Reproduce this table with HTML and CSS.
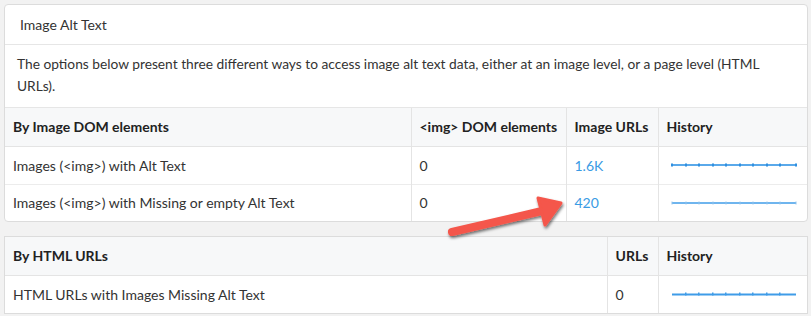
FILE: index.html
```html
<!DOCTYPE html>
<html lang="en">
<head>
    <meta charset="UTF-8">
    <title>Image Alt Text</title>
    <link rel="stylesheet" href="styles.css">
</head>
<body>

    <!-- Main panel -->
    <div class="panel">
        <div class="panel-heading">Image Alt Text</div>
        <div class="panel-body">
            The options below present three different ways to access image alt text data, either at an image level, or a page level (HTML URLs).
        </div>
        <table class="data-table">
            <colgroup>
                <col class="col-name">
                <col class="col-dom">
                <col class="col-urls">
                <col class="col-history">
            </colgroup>
            <thead>
                <tr>
                    <th>By Image DOM elements</th>
                    <th>&lt;img&gt; DOM elements</th>
                    <th>Image URLs</th>
                    <th>History</th>
                </tr>
            </thead>
            <tbody>
                <tr>
                    <td>Images (&lt;img&gt;) with Alt Text</td>
                    <td>0</td>
                    <td><a href="#">1.6K</a></td>
                    <td>
                        <svg class="spark" width="126" height="6" viewBox="0 0 126 6">
                            <line x1="1" y1="3" x2="125" y2="3" stroke="#5aa9ea" stroke-width="2"/>
                            <g fill="#2f8fe0">
                                <rect x="0" y="1.5" width="2" height="3"/><rect x="14" y="1.5" width="2" height="3"/>
                                <rect x="27" y="1.5" width="2" height="3"/><rect x="41" y="1.5" width="2" height="3"/>
                                <rect x="54" y="1.5" width="2" height="3"/><rect x="68" y="1.5" width="2" height="3"/>
                                <rect x="81" y="1.5" width="2" height="3"/><rect x="95" y="1.5" width="2" height="3"/>
                                <rect x="108" y="1.5" width="2" height="3"/><rect x="124" y="1.5" width="2" height="3"/>
                            </g>
                        </svg>
                    </td>
                </tr>
                <tr class="last-row">
                    <td>Images (&lt;img&gt;) with Missing or empty Alt Text</td>
                    <td>0</td>
                    <td><a href="#">420</a></td>
                    <td>
                        <svg class="spark" width="126" height="6" viewBox="0 0 126 6">
                            <line x1="1" y1="3" x2="125" y2="3" stroke="#3f9ce8" stroke-width="1.4"/>
                            <g fill="#8fc2ec">
                                <rect x="0.5" y="1.5" width="1" height="3"/><rect x="14.5" y="1.5" width="1" height="3"/>
                                <rect x="27.5" y="1.5" width="1" height="3"/><rect x="41.5" y="1.5" width="1" height="3"/>
                                <rect x="54.5" y="1.5" width="1" height="3"/><rect x="68.5" y="1.5" width="1" height="3"/>
                                <rect x="81.5" y="1.5" width="1" height="3"/><rect x="95.5" y="1.5" width="1" height="3"/>
                                <rect x="108.5" y="1.5" width="1" height="3"/><rect x="124.5" y="1.5" width="1" height="3"/>
                            </g>
                        </svg>
                    </td>
                </tr>
            </tbody>
        </table>
    </div>

    <!-- Second panel -->
    <div class="panel panel-second">
        <table class="data-table">
            <colgroup>
                <col class="col-wide">
                <col class="col-small">
                <col class="col-history">
            </colgroup>
            <thead>
                <tr>
                    <th>By HTML URLs</th>
                    <th>URLs</th>
                    <th>History</th>
                </tr>
            </thead>
            <tbody>
                <tr>
                    <td>HTML URLs with Images Missing Alt Text</td>
                    <td>0</td>
                    <td>
                        <svg class="spark" width="126" height="6" viewBox="0 0 126 6">
                            <line x1="1" y1="3.5" x2="125" y2="3.5" stroke="#3f9ce8" stroke-width="2"/>
                            <g fill="#3f9ce8">
                                <rect x="14" y="1.5" width="1.5" height="3"/><rect x="27" y="1.5" width="1.5" height="3"/>
                                <rect x="41" y="1.5" width="1.5" height="3"/><rect x="54" y="1.5" width="1.5" height="3"/>
                                <rect x="68" y="1.5" width="1.5" height="3"/><rect x="81" y="1.5" width="1.5" height="3"/>
                                <rect x="95" y="1.5" width="1.5" height="3"/><rect x="108" y="1.5" width="1.5" height="3"/>
                            </g>
                        </svg>
                    </td>
                </tr>
            </tbody>
        </table>
    </div>

    <!-- Annotation arrow drawn over the tables -->
    <svg class="arrow" width="140" height="60" viewBox="0 0 140 60">
        <defs>
            <filter id="shadow" x="-20%" y="-40%" width="140%" height="180%">
                <feDropShadow dx="1" dy="2" stdDeviation="1.5" flood-color="#000" flood-opacity="0.55"/>
            </filter>
        </defs>
        <g filter="url(#shadow)" fill="#f4574b" stroke="#f4574b" stroke-linejoin="round">
            <line x1="12" y1="44" x2="102" y2="23" stroke-width="8" stroke-linecap="round"/>
            <polygon points="121,15 98,10 105,37" stroke-width="3"/>
        </g>
    </svg>

</body>
</html>
```

FILE: styles.css
```css
* {
    box-sizing: border-box;
}

body {
    margin: 0;
    padding: 4px 3px 0 4px;
    background-color: #f2f2f2;
    font-family: Lato, "Open Sans", sans-serif;
    font-size: 14px;
    color: #333;
    position: relative;
}

/* Panels */
.panel {
    background-color: #fff;
    border: 1px solid #dcdcdc;
    border-radius: 4px;
    overflow: hidden;
}

.panel-second {
    margin-top: 14px;
    border-radius: 0;
}

.panel-heading {
    height: 40px;
    padding: 11px 15px;
    border-bottom: 1px solid #e6e6e6;
    line-height: 18px;
}

.panel-body {
    padding: 8px 16px 10px 12px;
    font-size: 13.75px;
    line-height: 22px;
    border-bottom: 1px solid #e6e6e6;
}

/* Tables */
.data-table {
    width: 100%;
    border-collapse: collapse;
    table-layout: fixed;
}

.col-name { width: 406px; }
.col-dom { width: 155px; }
.col-urls { width: 92px; }
.col-history { width: 149px; }
.col-wide { width: 602px; }
.col-small { width: 51px; }

.data-table th,
.data-table td {
    text-align: left;
    padding: 0 8px;
    height: 38px;
    border-left: 1px solid #e4e4e4;
    border-top: 1px solid #ececec;
    white-space: nowrap;
}

.data-table .last-row td {
    height: 37px;
}

.data-table th:first-child,
.data-table td:first-child {
    border-left: none;
}

.data-table th {
    background-color: #f7f8f9;
    font-weight: 700;
    color: #222;
    border-top: none;
    border-bottom: 1px solid #e4e4e4;
}

.data-table tbody tr:first-child td {
    border-top: none;
}

.data-table a {
    color: #3a9be4;
    text-decoration: none;
}

.spark {
    display: block;
    margin-left: 4px;
}

/* Annotation arrow */
.arrow {
    position: absolute;
    left: 440px;
    top: 188px;
}
```
